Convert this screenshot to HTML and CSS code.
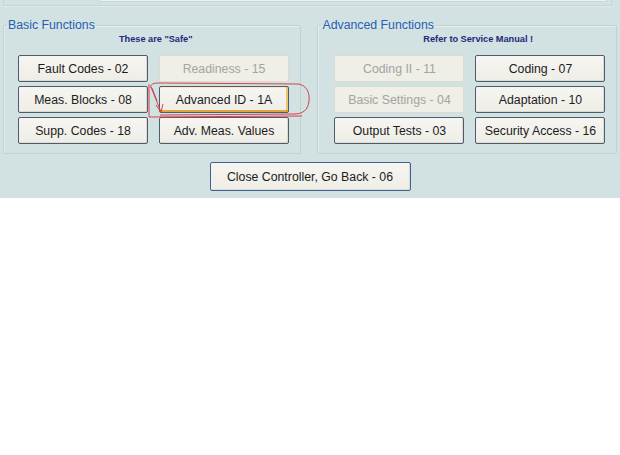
FILE: index.html
```html
<!DOCTYPE html>
<html>
<head>
<meta charset="utf-8">
<link rel="stylesheet" href="styles.css">
</head>
<body>
<div class="app">
  <div class="topbar"><div class="field"></div></div>
  <div class="groups">
    <fieldset class="group basic">
      <legend>Basic Functions</legend>
      <div class="note">These are "Safe"</div>
      <div class="grid">
        <button class="btn">Fault Codes - 02</button>
        <button class="btn off">Readiness - 15</button>
        <button class="btn">Meas. Blocks - 08</button>
        <button class="btn hot">Advanced ID - 1A</button>
        <button class="btn">Supp. Codes - 18</button>
        <button class="btn">Adv. Meas. Values</button>
      </div>
    </fieldset>
    <fieldset class="group adv">
      <legend>Advanced Functions</legend>
      <div class="note">Refer to Service Manual !</div>
      <div class="grid">
        <button class="btn off">Coding II - 11</button>
        <button class="btn">Coding - 07</button>
        <button class="btn off">Basic Settings - 04</button>
        <button class="btn">Adaptation - 10</button>
        <button class="btn">Output Tests - 03</button>
        <button class="btn">Security Access - 16</button>
      </div>
    </fieldset>
  </div>
  <div class="bottom">
    <button class="btn close">Close Controller, Go Back - 06</button>
  </div>
  <svg class="mark" width="620" height="198" viewBox="0 0 620 198">
    <path d="M151 88 C150 84 153 83 160 83 L298 84 C306 85 310 92 309 101 C308 110 303 114 294 114 L160 115" fill="none" stroke="#d8404c" stroke-width="1"/>
    <path d="M149 84 L149 117 L302 116" fill="none" stroke="#d8404c" stroke-width="1"/>
    <path d="M151 87 L161 112 M161 112 L156 105 M161 112 L163 104 M152 88 L157 101" fill="none" stroke="#d8404c" stroke-width="1"/>
  </svg>
</div>
</body>
</html>
```

FILE: styles.css
```css
html, body {
  margin: 0;
  padding: 0;
  background: #ffffff;
}

.app {
  position: relative;
  background: #d2e1e1;
  padding-bottom: 7px;
  font-family: "Liberation Sans", Arial, sans-serif;
}

.topbar {
  height: 5px;
  margin: 0 8px 0 3px;
  border: 1px solid #c6d6d6;
  border-top: none;
  box-shadow: 0 1px 0 #e0eaea;
}

.field {
  margin: 0 4px 0 95px;
  height: 1px;
  background: #e9f0f0;
  border: 1px solid #cbd8d8;
  border-top: none;
}

.groups {
  display: flex;
  gap: 16px;
  padding: 0 3px;
  margin-top: 12px;
}

.group {
  margin: 0;
  padding: 0 0 9px 0;
  min-width: 0;
  border: 1px solid #c0d2d2;
  box-shadow: inset 1px 1px 0 #e3eded;
  border-radius: 2px;
}

.basic { width: 300px; padding-left: 14px; }
.adv { width: 299px; padding-left: 16px; }

legend {
  margin-left: -11px;
  padding: 0 1px;
  font-size: 12.3px;
  line-height: 14px;
  color: #2560b4;
}

.adv legend { margin-left: -13px; }

.note {
  margin-top: 2px;
  font-size: 9.2px;
  line-height: 11px;
  font-weight: bold;
  color: #1e2a7a;
  text-align: center;
}

.basic .note { padding-left: 6px; padding-right: 13px; }
.adv .note { padding-left: 6px; padding-right: 0; }

.grid {
  display: grid;
  grid-template-columns: 130px 130px;
  grid-auto-rows: 27px;
  column-gap: 11px;
  row-gap: 4px;
  margin-top: 10px;
}

.btn {
  margin: 0;
  padding: 0;
  font-family: "Liberation Sans", Arial, sans-serif;
  font-size: 12.3px;
  color: #1c1c1c;
  background: linear-gradient(#f6f5f1, #eeede6);
  border: 1px solid #4e5c6c;
  border-radius: 2px;
  box-shadow: inset -1px -1px 0 #dcdbd2;
}

.btn.off {
  color: #a4a4a0;
  background: #efeee7;
  border-color: #dddbd1;
  box-shadow: none;
}

.btn.hot {
  box-shadow: inset 0 -2px 0 #e0a63c, inset -2px 0 0 #f0c46a, inset 0 1px 0 #fde9bd;
}

.bottom {
  display: flex;
  justify-content: center;
  margin-top: 8px;
}

.close {
  width: 201px;
  height: 29px;
  border-color: #3f6290;
}

.mark {
  position: absolute;
  left: 0;
  top: 0;
  pointer-events: none;
}
```
